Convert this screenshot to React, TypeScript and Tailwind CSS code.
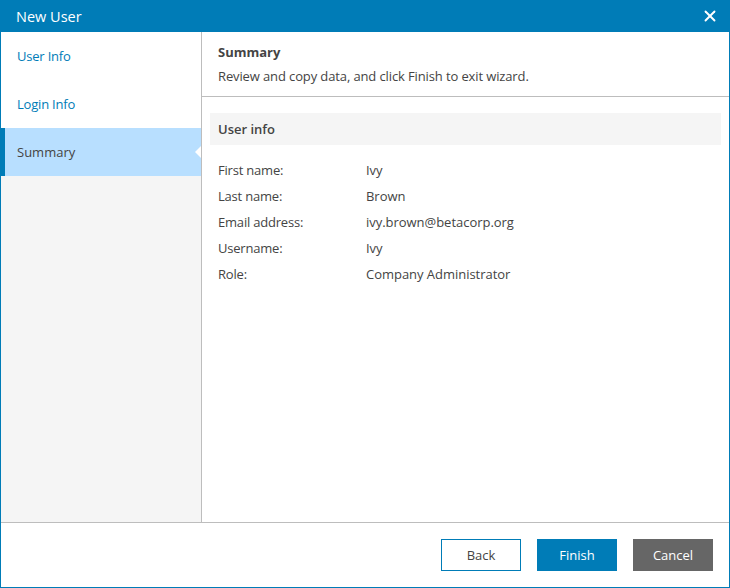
import { X } from "lucide-react";

const navItems = [
  { label: "User Info", active: false },
  { label: "Login Info", active: false },
  { label: "Summary", active: true },
];

const rows = [
  ["First name:", "Ivy"],
  ["Last name:", "Brown"],
  ["Email address:", "ivy.brown@betacorp.org"],
  ["Username:", "Ivy"],
  ["Role:", "Company Administrator"],
];

export default function App() {
  return (
    <div className="w-[730px] h-[588px] flex flex-col bg-white border border-t-0 border-[#007cb7] font-['Open_Sans',sans-serif] text-[13px] text-[#444444] overflow-hidden">
      {/* Title bar */}
      <div className="h-8 shrink-0 -mx-px flex items-center justify-between bg-[#007cb7] pl-4 pr-[11px] text-white">
        <span className="text-[14.5px] pt-0.5">New User</span>
        <X size={18} strokeWidth={2.5} />
      </div>

      <div className="flex-1 flex min-h-0">
        {/* Steps */}
        <div className="w-[201px] shrink-0 flex flex-col bg-[#f5f5f5] border-r border-[#bdbdbd]">
          {navItems.map((item) => (
            <div
              key={item.label}
              className={
                item.active
                  ? "relative h-12 -ml-px flex items-center bg-[#b8dfff] border-l-[5px] border-[#007cb7] pl-3 pt-0.5 text-[#444444]"
                  : "h-12 flex items-center bg-white pl-4 pt-0.5 text-[#007cb7] tracking-[-0.2px]"
              }
            >
              {item.label}
              {item.active && (
                <div className="absolute right-0 top-[18px] w-0 h-0 border-y-[6px] border-y-transparent border-r-[6px] border-r-white" />
              )}
            </div>
          ))}
        </div>

        {/* Content */}
        <div className="flex-1 min-w-0 flex flex-col">
          <div className="h-[65px] shrink-0 border-b border-[#bdbdbd] pl-4 pt-[11px]">
            <div className="font-bold leading-[18px]">Summary</div>
            <div className="mt-1.5 leading-[18px] tracking-[-0.12px]">Review and copy data, and click Finish to exit wizard.</div>
          </div>
          <div className="pl-2 pr-2 pt-4">
            <div className="h-8 flex items-center bg-[#f5f5f5] pl-2 pt-0.5 font-semibold">User info</div>
            <div className="mt-3 pl-2 flex flex-col">
              {rows.map(([label, value]) => (
                <div key={label} className="h-[26px] flex items-center pt-0.5">
                  <span className="w-[148px] shrink-0 tracking-[-0.2px]">{label}</span>
                  <span className="tracking-[-0.03px]">{value}</span>
                </div>
              ))}
            </div>
          </div>
        </div>
      </div>

      {/* Footer */}
      <div className="h-[65px] shrink-0 flex items-start justify-end gap-4 border-t border-[#bdbdbd] pt-4 pr-4">
        <button className="w-20 h-8 pt-0.5 border border-[#007cb7] bg-white text-[#444444]">Back</button>
        <button className="w-20 h-8 pt-0.5 bg-[#007cb7] text-white">Finish</button>
        <button className="w-20 h-8 pt-0.5 bg-[#666666] text-white">Cancel</button>
      </div>
    </div>
  );
}
